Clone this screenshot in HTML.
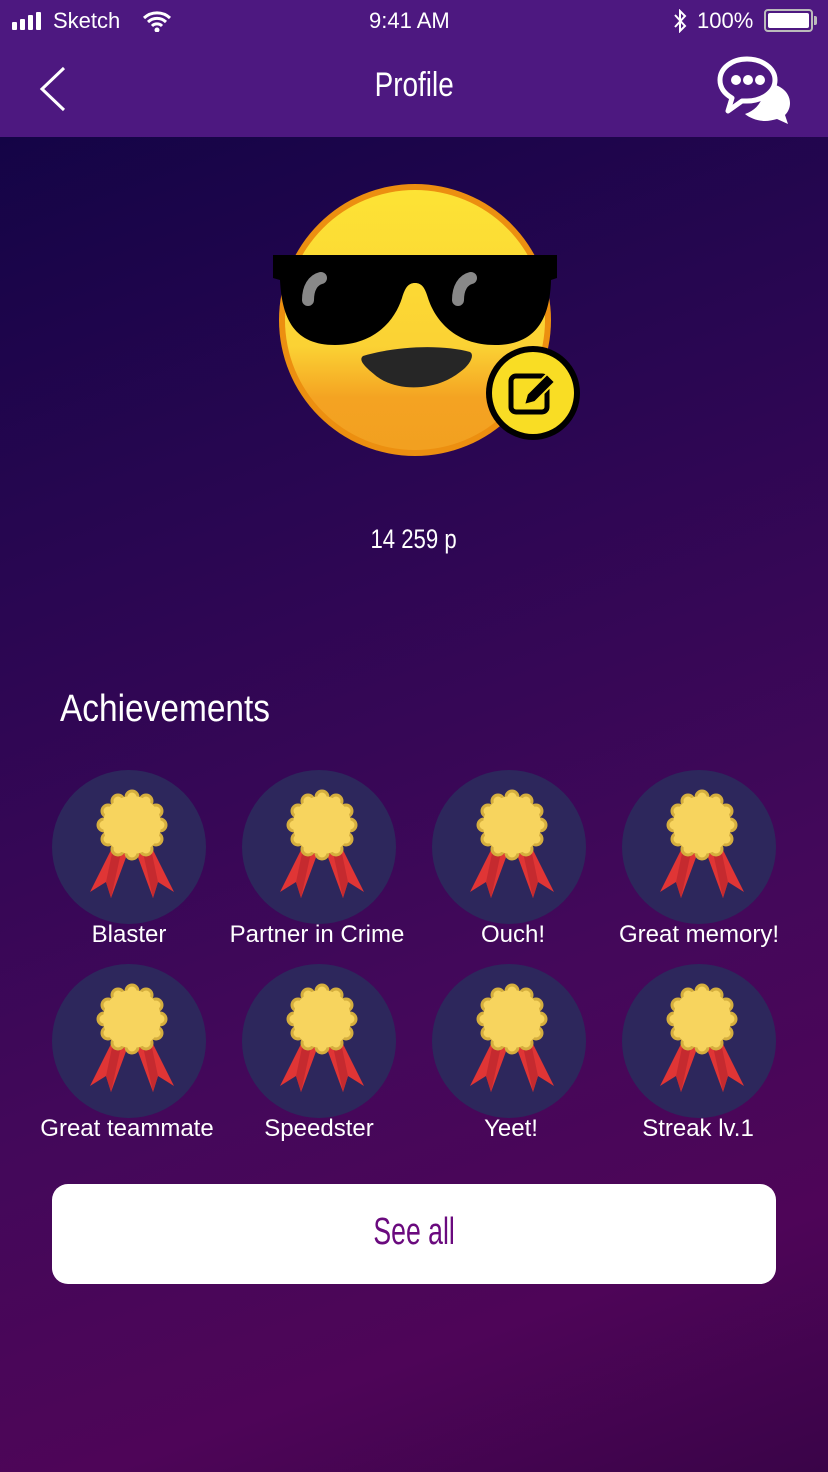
<!DOCTYPE html>
<html><head><meta charset="utf-8"><style>
*{margin:0;padding:0;box-sizing:border-box}
body{width:828px;height:1472px;overflow:hidden;font-family:"Liberation Sans",sans-serif;background:linear-gradient(160deg,#0e0443 0%,#2a0652 35%,#43085a 65%,#4e0558 85%,#3a0448 100%);position:relative;color:#fff}
.nav{position:absolute;left:0;top:0;width:828px;height:137px;background:#4d1880}
.sb{position:absolute;top:8px;font-size:22px}
.title{position:absolute;top:66px;width:100%;text-align:center;font-size:34px}
.title span,.pts span,.btn span{display:inline-block;transform:scaleX(.82)}
.ach{position:absolute;left:60px;top:688px;font-size:38px;transform:scaleX(.88);transform-origin:left}
.badge{position:absolute;width:154px;height:154px}
.lbl{position:absolute;width:240px;text-align:center;font-size:24px}
.btn{position:absolute;left:52px;top:1184px;width:724px;height:100px;background:#fff;border-radius:16px;color:#6a0a7e;text-align:center;line-height:96px;font-size:38px}
.btn span{transform:scaleX(.7)}
.pts{position:absolute;left:0;top:524px;width:828px;text-align:center;font-size:27px}
</style></head><body>
<svg width="0" height="0" style="position:absolute"><defs>
<g id="m">
<circle cx="77" cy="77" r="77" fill="#2d275c"/>
<polygon points="62,74 76,82 59,128 54,112 38,122" fill="#e03535"/>
<polygon points="62,74 70,78 59,128 54,112" fill="#c52a2f"/>
<polygon points="98,74 84,82 101,128 106,112 122,122" fill="#e03535"/>
<polygon points="98,74 90,78 101,128 106,112" fill="#c52a2f"/>
<g fill="#f7d45e" stroke="#d5ae3e" stroke-width="3">
<circle cx="80" cy="27" r="6"/><circle cx="94" cy="31" r="6"/><circle cx="104" cy="41" r="6"/><circle cx="108" cy="55" r="6"/><circle cx="104" cy="69" r="6"/><circle cx="94" cy="79" r="6"/><circle cx="80" cy="83" r="6"/><circle cx="66" cy="79" r="6"/><circle cx="56" cy="69" r="6"/><circle cx="52" cy="55" r="6"/><circle cx="56" cy="41" r="6"/><circle cx="66" cy="31" r="6"/>
</g>
<circle cx="80" cy="55" r="29" fill="#f7d45e"/>
</g></defs></svg>
<div class="nav">
<svg style="position:absolute;left:12px;top:12px" width="36" height="18"><rect x="0" y="10" width="5" height="8" rx="1" fill="#fff"/><rect x="8" y="7" width="5" height="11" rx="1" fill="#fff"/><rect x="16" y="3" width="5" height="15" rx="1" fill="#fff"/><rect x="24" y="0" width="5" height="18" rx="1" fill="#fff"/></svg>
<div class="sb" style="left:53px">Sketch</div>
<svg style="position:absolute;left:142px;top:10px" width="30" height="22" viewBox="0 0 30 22"><path d="M2 8a19 19 0 0 1 26 0M6 12a13 13 0 0 1 18 0M10 16a7 7 0 0 1 10 0" stroke="#fff" stroke-width="3" fill="none"/><circle cx="15" cy="20" r="2.5" fill="#fff"/></svg>
<div class="sb" style="left:369px">9:41 AM</div>
<svg style="position:absolute;left:672px;top:9px" width="16" height="24" viewBox="0 0 16 24"><path d="M3 6l10 11-5 5V2l5 5L3 18" stroke="#fff" stroke-width="2" fill="none"/></svg>
<div class="sb" style="left:697px">100%</div>
<div style="position:absolute;left:764px;top:9px;width:49px;height:23px;border:2px solid #bbb;border-radius:4px;padding:2px"><div style="background:#fff;width:100%;height:100%;border-radius:2px"></div></div>
<div style="position:absolute;left:814px;top:16px;width:3px;height:9px;background:#bbb;border-radius:0 2px 2px 0"></div>
<svg style="position:absolute;left:38px;top:66px" width="30" height="46"><path d="M26 2L4 23l22 21" stroke="#fff" stroke-width="3" fill="none"/></svg>
<div class="title"><span>Profile</span></div>
<svg style="position:absolute;left:716px;top:55px" width="78" height="70" viewBox="0 0 78 70"><path d="M48 28c14 0 26 8 26 20 0 5-2 9-5 12l3 9-11-5c-4 1-8 2-12 2-8 0-15-3-20-7 12-4 20-14 19-31z" fill="#fff"/><path d="M31 4C16 4 4 13 4 25c0 8 5 14 12 18l-4 13 14-10c2 0 3 0 5 0 15 0 28-9 28-21S46 4 31 4z" fill="#4d1880" stroke="#fff" stroke-width="5" stroke-linejoin="round"/><circle cx="20" cy="25" r="5" fill="#fff"/><circle cx="32" cy="25" r="5" fill="#fff"/><circle cx="44" cy="25" r="5" fill="#fff"/></svg>
</div>
<svg style="position:absolute;left:270px;top:180px" width="320" height="290" viewBox="0 0 320 290">
<defs><linearGradient id="f" x1="0" y1="0" x2="0" y2="1"><stop offset="0" stop-color="#fde335"/><stop offset=".6" stop-color="#fbd234"/><stop offset=".8" stop-color="#f4a322"/><stop offset="1" stop-color="#f2a020"/></linearGradient></defs>
<circle cx="145" cy="140" r="136" fill="#ec8f10"/>
<circle cx="145" cy="140" r="130" fill="url(#f)"/>
<path d="M3 75H287V98L281 100C280 140 265 165 225 165C185 165 165 140 158 118C155 108 152 103 145 103C138 103 135 108 132 118C125 140 105 165 65 165C25 165 12 140 10 100L3 98Z" fill="#000"/>
<path d="M38 120c0-12 5-20 13-22" stroke="#888" stroke-width="12" stroke-linecap="round" fill="none"/>
<path d="M188 120c0-12 5-20 13-22" stroke="#888" stroke-width="12" stroke-linecap="round" fill="none"/>
<path d="M93 176C130 165 175 165 200 172C205 175 200 185 190 192C165 212 125 212 105 195C95 187 88 180 93 176Z" fill="#262626"/>
<circle cx="263" cy="213" r="47" fill="#000"/>
<circle cx="263" cy="213" r="41" fill="#f9dd24"/>
<rect x="241" y="196" width="36" height="36" rx="5" fill="none" stroke="#000" stroke-width="5"/>
<path d="M254 225l3-11 20-20 8 8-20 20z" fill="#000" stroke="#f9dd24" stroke-width="2"/>
</svg>
<div class="pts"><span>14 259 p</span></div>
<div class="ach">Achievements</div>
<svg class="badge" style="left:52px;top:770px"><use href="#m"/></svg>
<svg class="badge" style="left:242px;top:770px"><use href="#m"/></svg>
<svg class="badge" style="left:432px;top:770px"><use href="#m"/></svg>
<svg class="badge" style="left:622px;top:770px"><use href="#m"/></svg>
<svg class="badge" style="left:52px;top:964px"><use href="#m"/></svg>
<svg class="badge" style="left:242px;top:964px"><use href="#m"/></svg>
<svg class="badge" style="left:432px;top:964px"><use href="#m"/></svg>
<svg class="badge" style="left:622px;top:964px"><use href="#m"/></svg>
<div class="lbl" style="left:9px;top:921px">Blaster</div>
<div class="lbl" style="left:197px;top:921px">Partner in Crime</div>
<div class="lbl" style="left:393px;top:921px">Ouch!</div>
<div class="lbl" style="left:579px;top:921px">Great memory!</div>
<div class="lbl" style="left:7px;top:1115px">Great teammate</div>
<div class="lbl" style="left:199px;top:1115px">Speedster</div>
<div class="lbl" style="left:391px;top:1115px">Yeet!</div>
<div class="lbl" style="left:578px;top:1115px">Streak lv.1</div>
<div class="btn"><span>See all</span></div>
</body></html>
